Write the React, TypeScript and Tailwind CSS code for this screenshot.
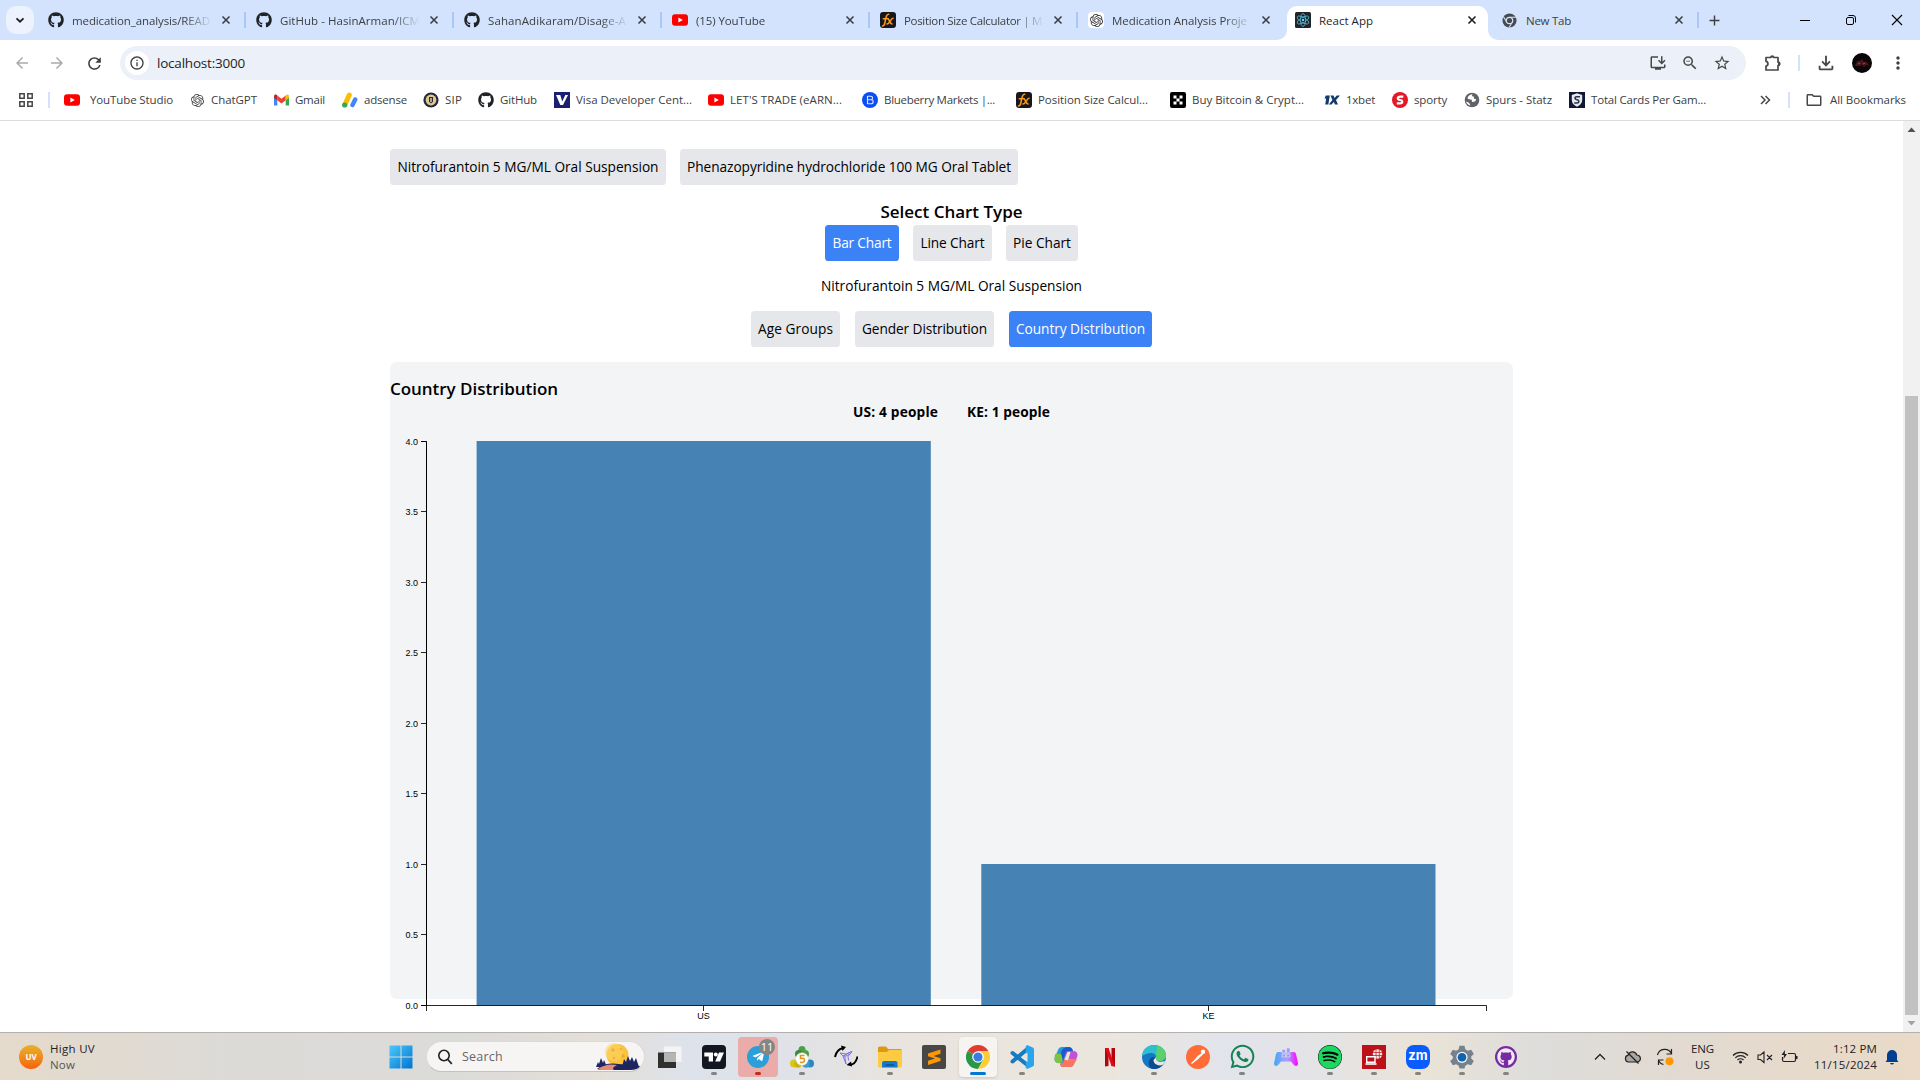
import React, { useLayoutEffect, useRef, useState } from 'react';
import { FaGithub, FaSpotify, FaWhatsapp, FaTelegramPlane } from 'react-icons/fa';
import {
  MdArrowBack, MdArrowForward, MdRefresh, MdInfoOutline, MdAdd, MdMoreVert,
  MdOutlineInstallDesktop, MdZoomOut, MdStarBorder, MdOutlineFileDownload, MdOutlineFolder,
} from 'react-icons/md';
import { SiOpenai } from 'react-icons/si';

/* Text whose tracking is adjusted so that it fills a known width. */
function Fit({ w, children, className = '' }: { w: number; children: string; className?: string }) {
  const ref = useRef<HTMLSpanElement>(null);
  const [spacing, setSpacing] = useState(0);
  useLayoutEffect(() => {
    const el = ref.current;
    if (!el) return;
    el.style.letterSpacing = '0px';
    const s = (w - el.getBoundingClientRect().width) / children.length;
    el.style.letterSpacing = `${s}px`;
    setSpacing(s);
  }, [w, children]);
  return (
    <span ref={ref} style={{ letterSpacing: spacing }} className={`inline-block w-max shrink-0 whitespace-pre ${className}`}>
      {children}
    </span>
  );
}

/* ---------- small brand icons (16px) ---------- */
const YouTube = () => (
  <svg width="16" height="16" viewBox="0 0 16 16"><rect y="2.2" width="16" height="11.6" rx="3" fill="#f00" /><path d="M6.4 5.4v5.2L10.8 8z" fill="#fff" /></svg>
);
const GitHub = () => <FaGithub size={16} color="#1f2328" />;
const OpenAI = () => <SiOpenai size={13} color="#444" />;
const OpenAITab = () => (
  <span className="flex size-4 items-center justify-center rounded-sm bg-white"><SiOpenai size={13} color="#333" /></span>
);
const Fx = () => (
  <svg width="16" height="16" viewBox="0 0 16 16">
    <rect width="16" height="16" rx="3" fill="#17181f" />
    <path d="M2.500 14c2 0 2.300-2 2.800-5.500C5.800 5 6.300 2.200 8.700 2.200M3.300 6.800h5M7.500 6.500c2 0 2.200 5.500 4.500 5.500M13 6.200c-2 0-3.500 5.800-6 5.800" stroke="#f79a1e" strokeWidth="1.600" fill="none" strokeLinecap="round" />
  </svg>
);
const ReactLogo = () => (
  <svg width="16" height="16" viewBox="0 0 16 16">
    <rect width="16" height="16" rx="1.500" fill="#20232a" />
    <g stroke="#53b9d1" fill="none" strokeWidth=".8">
      <ellipse cx="8" cy="8" rx="6.500" ry="2.600" transform="rotate(30 8 8)" />
      <ellipse cx="8" cy="8" rx="6.500" ry="2.600" transform="rotate(90 8 8)" />
      <ellipse cx="8" cy="8" rx="6.500" ry="2.600" transform="rotate(150 8 8)" />
    </g>
    <circle cx="8" cy="8" r="1.200" fill="#61dafb" />
  </svg>
);
const ChromeGrey = () => (
  <svg width="15" height="15" viewBox="0 0 16 16">
    <circle cx="8" cy="8" r="7.500" fill="#474b50" />
    <path d="M8 4.600h6.800M5 9.700 1.600 3.900M11 9.700 7.600 15.500" stroke="#d3e3fd" strokeWidth="1.100" />
    <circle cx="8" cy="8" r="3.400" fill="#474b50" stroke="#d3e3fd" strokeWidth="1.300" />
  </svg>
);
const Gmail = () => (
  <svg width="15" height="16" viewBox="0 0 15 16">
    <path d="M0 4.500V13.500h3.300V7z" fill="#4285f4" /><path d="M15 4.500V13.500h-3.300V7z" fill="#34a853" />
    <path d="M3.300 3.500v4.700l4.200 3.200 4.200-3.200V3.500L7.500 6.700z" fill="#ea4335" />
    <path d="M0 4.200C0 2.500 2 2 3.300 3.200v5L0 5.700z" fill="#c5221f" /><path d="M15 4.200c0-1.700-2-2.200-3.300-1v5L15 5.700z" fill="#fbbc04" />
  </svg>
);
const AdSense = () => (
  <svg width="16" height="16" viewBox="0 0 16 16">
    <path d="M3 12.500 7.300 3" stroke="#fbbc04" strokeWidth="5" strokeLinecap="round" />
    <path d="m10.500 13 2.700-5.500" stroke="#4285f4" strokeWidth="4.400" strokeLinecap="round" />
    <circle cx="2.700" cy="13" r="2.600" fill="#34a853" />
  </svg>
);
const Sip = () => (
  <svg width="16" height="16" viewBox="0 0 16 16">
    <circle cx="8" cy="8" r="7.600" fill="#26283f" /><circle cx="8" cy="8" r="5.400" fill="#dcc98b" />
    <path d="M6 5h4v4.500L8 11.500 6 9.500z" fill="#26283f" /><path d="M7.300 6h1.400v4H7.300z" fill="#e9dcae" />
  </svg>
);
const Visa = () => (
  <svg width="16" height="16" viewBox="0 0 16 16"><rect width="16" height="16" fill="#1a1f71" /><path d="M2 3h4.300l1.900 6.500L11.300 3H14L9 13H6.300z" fill="#fff" /></svg>
);
const Blueberry = () => (
  <svg width="16" height="16" viewBox="0 0 16 16">
    <circle cx="8" cy="8" r="8" fill="#0b4df5" />
    <path d="M5.500 4v8M5.500 4.300h3.300a1.700 1.700 0 0 1 0 3.500H5.500M5.500 7.800h3.700a2 2 0 0 1 0 4H5.500" stroke="#dfe8ff" strokeWidth="1.100" fill="none" />
  </svg>
);
const Okx = () => (
  <svg width="16" height="16" viewBox="0 0 16 16">
    <rect width="16" height="16" rx="2" fill="#000" />
    <path d="M3.500 3.500h3v3h-3zM9.500 3.500h3v3h-3zM6.500 6.500h3v3h-3zM3.500 9.500h3v3h-3zM9.500 9.500h3v3h-3z" fill="#fff" />
  </svg>
);
const OneX = () => (
  <svg width="16" height="16" viewBox="0 0 16 16"><path d="M1.800 3.500h4L4.300 12.500H1.200l1-6H.5zM6.500 3.500h3l1 2.500 2.300-2.500H16L12 8l2 4.500h-3L9.800 10l-2.300 2.500H4.800L8.400 8z" fill="#123a6d" /></svg>
);
const Sporty = () => (
  <svg width="16" height="16" viewBox="0 0 16 16">
    <circle cx="8" cy="8" r="8" fill="#e41827" /><path d="M11.300 4.600H8.500C5 4.600 5 7.800 8 8s3 3.400 0 3.400H4.800" stroke="#fff" strokeWidth="2.200" fill="none" />
  </svg>
);
const Globe = () => (
  <svg width="16" height="16" viewBox="0 0 16 16">
    <circle cx="8" cy="8" r="7.300" fill="#5f6368" />
    <path d="M8.500 2.200C4.500 2.500 3 5.500 4 7l3.700.8.300 2.200 3-.4 1.400-2.400-2.300-.5-.3-2.200-2-.2zM2 9.500l3 1.300 1.500 2.800C4 13 2.500 11.500 2 9.500z" fill="#fff" />
  </svg>
);
const Shield = () => (
  <svg width="16" height="16" viewBox="0 0 16 16">
    <rect width="16" height="16" fill="#101736" /><path d="M8 1.200 13.200 3v5c0 3.300-2.200 5.300-5.200 6.800C5 13.300 2.800 11.300 2.800 8V3z" fill="#e7e8ec" />
    <path d="M11 4.800H7.500c-2.300 0-1.800 2.700.5 3 2.600.3 2.300 3.200 0 3.200H5.200" stroke="#2b304a" strokeWidth="1.600" fill="none" />
  </svg>
);

const Close = ({ dark = false }: { dark?: boolean }) => (
  <svg width="16" height="16" viewBox="0 0 16 16" className="shrink-0"><path d="m4.500 4.500 7 7m0-7-7 7" stroke={dark ? '#1f1f1f' : '#3c4043'} strokeWidth="1.600" /></svg>
);

const tabs = [
  { icon: <GitHub />, title: 'medication_analysis/READ', w: 138 },
  { icon: <GitHub />, title: 'GitHub - HasinArman/ICM', w: 140 },
  { icon: <GitHub />, title: 'SahanAdikaram/Disage-A', w: 138 },
  { icon: <YouTube />, title: '(15) YouTube', w: 69 },
  { icon: <Fx />, title: 'Position Size Calculator | M', w: 138 },
  { icon: <OpenAITab />, title: 'Medication Analysis Proje', w: 135 },
];

function TabStrip() {
  return (
    <div className="flex h-10 bg-[#d3e3fd] text-[11.500px] text-[#3c4043]">
      <div className="ml-1.5 mt-1.5 flex size-7 shrink-0 items-center justify-center rounded-[10px] bg-[#ecf2fe]">
        <svg width="10" height="10" viewBox="0 0 10 10"><path d="m1.500 3.300 3.500 3.400 3.500-3.400" stroke="#1f1f1f" strokeWidth="1.800" fill="none" /></svg>
      </div>
      <div className="ml-3.5 flex h-10">
        {tabs.map((t, i) => (
          <div key={i} className="flex w-52 items-center">
            <span className="flex size-4 shrink-0 items-center justify-center">{t.icon}</span>
            <span className="ml-2 w-[140px] overflow-hidden pt-[2px] [mask-image:linear-gradient(to_right,black_112px,transparent_140px)]">
              <Fit w={t.w}>{t.title}</Fit>
            </span>
            <span className="ml-[6px] flex"><Close /></span>
            <span className={i < 5 ? 'ml-[10px] h-4 w-[2px] bg-[#a8c7fa]' : 'hidden'} />
          </div>
        ))}
      </div>
      <div className="relative -ml-[9px] mt-1.5 flex h-[34px] w-[201px] items-center rounded-t-[10px] bg-white pb-1.5 pl-2 text-[#1f1f1f]">
        <svg className="absolute -left-[10px] bottom-0" width="10" height="10"><path d="M10 0v10H0A10 10 0 0 0 10 0z" fill="#fff" /></svg>
        <svg className="absolute -right-[10px] bottom-0" width="10" height="10"><path d="M0 0v10h10A10 10 0 0 1 0 0z" fill="#fff" /></svg>
        <ReactLogo />
        <span className="ml-2 w-[145px] pt-[2px]"><Fit w={54}>React App</Fit></span>
        <Close dark />
      </div>
      <div className="ml-3.5 flex h-10 w-[198px] items-center">
        <ChromeGrey />
        <span className="ml-[9px] w-[145px] pt-[2px]"><Fit w={45}>New Tab</Fit></span>
        <Close />
        <span className="ml-[10px] h-4 w-[2px] bg-[#a8c7fa]" />
      </div>
      <div className="ml-[6px] flex h-10 items-center"><MdAdd size={17} color="#3c4043" /></div>
      <div className="ml-auto flex h-10 items-center gap-[30px] pr-[15px]">
        <svg width="16" height="16" viewBox="0 0 16 16"><path d="M3 8.500h10" stroke="#000" /></svg>
        <svg width="16" height="16" viewBox="0 0 16 16"><rect x="3.500" y="5.500" width="7" height="7" rx="1.500" stroke="#000" fill="none" /><path d="M5.500 3.500H10A2.500 2.500 0 0 1 12.500 6v4.500" stroke="#000" fill="none" /></svg>
        <svg width="16" height="16" viewBox="0 0 16 16"><path d="m3 3 10 10M13 3 3 13" stroke="#000" strokeWidth="1.100" /></svg>
      </div>
    </div>
  );
}

function Toolbar() {
  return (
    <div className="flex h-[46px] items-center bg-white text-[#474747]">
      <span className="ml-[13px] text-[#a8abb0]"><MdArrowBack size={18} /></span>
      <span className="ml-[17px] text-[#a8abb0]"><MdArrowForward size={18} /></span>
      <span className="ml-[19px]"><MdRefresh size={19} color="#3c4043" /></span>
      <div className="ml-[16px] flex h-[34px] w-[1626px] items-center rounded-full bg-[#ecf0f9] pl-[5px]">
        <span className="flex size-6 items-center justify-center rounded-full bg-white"><MdInfoOutline size={16} color="#3c4043" /></span>
        <span className="ml-2 text-[13.500px] text-[#1f1f1f]"><Fit w={88}>localhost:3000</Fit></span>
        <div className="ml-auto flex items-center gap-[14px] pr-[15px]">
          <MdOutlineInstallDesktop size={18} /><MdZoomOut size={18} /><MdStarBorder size={18} />
        </div>
      </div>
      <svg className="ml-[17px]" width="20" height="20" viewBox="0 0 20 20">
        <path d="M3 4.500h4.600a1.700 1.700 0 0 1 3.300 0H15v4.600a1.700 1.700 0 0 1 0 3.400v4.500H3v-4c2.600-.3 2.600-4.300 0-4.600z" stroke="#474747" strokeWidth="1.700" strokeLinejoin="round" fill="none" />
        <path d="M7.700 4.500a1.600 1.600 0 0 1 3.200 0zM15 9.200a1.600 1.600 0 0 1 0 3.200z" fill="#474747" />
      </svg>
      <span className="ml-[15px] h-4 w-[2px] bg-[#d3e3fd]" />
      <span className="ml-[15px]"><MdOutlineFileDownload size={22} /></span>
      <svg className="ml-[15px]" width="20" height="20" viewBox="0 0 20 20">
        <circle cx="10" cy="10" r="10" fill="#0a0507" /><path d="M3 13c1-5 3-6 5-5l2-2 2 3c3-1 4 1 5 4l-3-1-2 2-2-2-3 1z" fill="#48151b" /><path d="m6 11 2-1m3 1 2-1" stroke="#d23a3f" />
      </svg>
      <span className="ml-[16px]"><MdMoreVert size={20} color="#3c4043" /></span>
    </div>
  );
}

const bookmarks = [
  { icon: <YouTube />, t: 'YouTube Studio', w: 83, gap: 'gap-[10px]', box: 'w-[125px]' },
  { icon: <OpenAI />, t: 'ChatGPT', w: 46, gap: 'gap-[6px]', box: 'w-[84px]' },
  { icon: <Gmail />, t: 'Gmail', w: 30, gap: 'gap-[6px]', box: 'w-[69px]' },
  { icon: <AdSense />, t: 'adsense', w: 43, gap: 'gap-[6px]', box: 'w-[81px]' },
  { icon: <Sip />, t: 'SIP', w: 17, gap: 'gap-[6px]', box: 'w-[55px]' },
  { icon: <GitHub />, t: 'GitHub', w: 37, gap: 'gap-[6px]', box: 'w-[76px]' },
  { icon: <Visa />, t: 'Visa Developer Cent...', w: 116, gap: 'gap-[6px]', box: 'w-[154px]' },
  { icon: <YouTube />, t: "LET'S TRADE (eARN...", w: 112, gap: 'gap-[6px]', box: 'w-[154px]' },
  { icon: <Blueberry />, t: 'Blueberry Markets |...', w: 111, gap: 'gap-[6px]', box: 'w-[154px]' },
  { icon: <Fx />, t: 'Position Size Calcul...', w: 110, gap: 'gap-[6px]', box: 'w-[154px]' },
  { icon: <Okx />, t: 'Buy Bitcoin & Crypt...', w: 112, gap: 'gap-[6px]', box: 'w-[154px]' },
  { icon: <OneX />, t: '1xbet', w: 29, gap: 'gap-[6px]', box: 'w-[68px]' },
  { icon: <Sporty />, t: 'sporty', w: 33, gap: 'gap-[6px]', box: 'w-[72px]' },
  { icon: <Globe />, t: 'Spurs - Statz', w: 66, gap: 'gap-[6px]', box: 'w-[105px]' },
  { icon: <Shield />, t: 'Total Cards Per Gam...', w: 115, gap: 'gap-[6px]', box: 'w-[189px]' },
];

function BookmarksBar() {
  return (
    <div className="flex h-[35px] items-center border-b border-[#dadce0] bg-white pb-[6px] text-[11.500px] text-[#3c4043]">
      <svg className="ml-[18px]" width="16" height="16" viewBox="0 0 16 16"><path d="M1.800 1.800h4.400v4.400H1.800zM9.800 1.800h4.400v4.400H9.800zM1.800 9.800h4.400v4.400H1.800zM9.800 9.800h4.400v4.400H9.800z" stroke="#474747" strokeWidth="1.500" fill="none" /></svg>
      <span className="ml-[14px] mr-[14px] h-4 w-[2px] bg-[#d3e3fd]" />
      {bookmarks.map((b, i) => (
        <div key={i} className={`flex shrink-0 items-center ${b.gap} ${b.box}`}>
          <span className="flex size-4 shrink-0 items-center justify-center">{b.icon}</span>
          <Fit w={b.w}>{b.t}</Fit>
        </div>
      ))}
      <svg width="14" height="14" viewBox="0 0 14 14"><path d="m3 3 4 4-4 4M7.500 3l4 4-4 4" stroke="#474747" strokeWidth="1.500" fill="none" /></svg>
      <span className="ml-[16px] mr-[15px] h-4 w-[2px] bg-[#d3e3fd]" />
      <MdOutlineFolder size={18} color="#474747" />
      <span className="ml-[7px]"><Fit w={76}>All Bookmarks</Fit></span>
    </div>
  );
}

/* ---------- page ---------- */
function Btn({ w, box, children, active = false }: { w: number; box: string; children: string; active?: boolean }) {
  return (
    <button className={`flex h-9 items-center justify-center rounded-[3.600px] ${box} ${active ? 'bg-[#3b82f6] text-white' : 'bg-[#e5e7eb] text-black'}`}>
      <Fit w={w}>{children}</Fit>
    </button>
  );
}

const ticks = ['4.0', '3.5', '3.0', '2.5', '2.0', '1.5', '1.0', '0.5', '0.0'];

function Chart() {
  return (
    <svg width="1123" height="600" className="block shrink-0 overflow-visible">
      <rect x="86.600" y="18" width="454.200" height="564.500" fill="#4682b4" />
      <rect x="591.300" y="441" width="454.200" height="141.500" fill="#4682b4" />
      <path d="M31 18.500H36.500V582.500H31" stroke="#000" fill="none" />
      <path d="M36.500 588V582.500H1096.500V588M313.500 582.500v5.500M818.500 582.500v5.500" stroke="#000" fill="none" strokeOpacity=".85" />
      {ticks.map((t, i) => (
        <g key={t}>
          <path d={`M31 ${Math.floor(18 + i * 70.5) + 0.5}h5.500`} stroke="#000" strokeOpacity=".85" />
          <text x="28" y={21.5 + i * 70.5} fontSize="9" textAnchor="end" textLength="12.500" lengthAdjust="spacingAndGlyphs" fontFamily="Liberation Sans, sans-serif">{t}</text>
        </g>
      ))}
      <text x="313.500" y="595.800" fontSize="9" textAnchor="middle" fontFamily="Liberation Sans, sans-serif">US</text>
      <text x="818.500" y="595.800" fontSize="9" textAnchor="middle" fontFamily="Liberation Sans, sans-serif">KE</text>
    </svg>
  );
}

function Page() {
  return (
    <div className="flex h-[911px] bg-white">
      <main className="flex h-[911px] w-[1903px] flex-col overflow-hidden px-[390px] pt-7 text-[13.700px] text-black">
        <div className="flex gap-[14px]">
          <Btn w={261} box="w-[276px]">Nitrofurantoin 5 MG/ML Oral Suspension</Btn>
          <Btn w={324} box="w-[338px]">Phenazopyridine hydrochloride 100 MG Oral Tablet</Btn>
        </div>
        <h2 className="mt-3 flex h-7 items-center justify-center pt-[2px] text-[17px] font-semibold"><Fit w={142}>Select Chart Type</Fit></h2>
        <div className="flex justify-center gap-[14px]">
          <Btn w={59} box="w-[74px]" active>Bar Chart</Btn>
          <Btn w={64} box="w-[79px]">Line Chart</Btn>
          <Btn w={58} box="w-[72px]">Pie Chart</Btn>
        </div>
        <p className="mt-[13px] flex h-6 items-center justify-center"><Fit w={261}>Nitrofurantoin 5 MG/ML Oral Suspension</Fit></p>
        <div className="mt-[13px] flex justify-center gap-[15px]">
          <Btn w={75} box="w-[89px]">Age Groups</Btn>
          <Btn w={125} box="w-[139px]">Gender Distribution</Btn>
          <Btn w={129} box="w-[143px]" active>Country Distribution</Btn>
        </div>
        <section className="mt-[15px] flex h-[637px] shrink-0 flex-col rounded-[7px] bg-[#f3f4f6] pt-[14px]">
          <h3 className="flex h-[25px] items-center text-[17px] font-semibold"><Fit w={168}>Country Distribution</Fit></h3>
          <div className="flex h-[23px] items-center justify-center gap-[29px] pt-px font-bold">
            <Fit w={85}>US: 4 people</Fit>
            <Fit w={83}>KE: 1 people</Fit>
          </div>
          <Chart />
        </section>
      </main>
      <div className="flex w-[17px] flex-col items-center bg-[#f1f1f1]">
        <svg width="17" height="17"><path d="M4.500 11h8l-4-4.500z" fill="#505050" /></svg>
        <div className="mt-[258px] h-[619px] w-[13px] bg-[#c1c1c1]" />
        <svg width="17" height="17"><path d="M4.500 6h8l-4 4.500z" fill="#a3a3a3" /></svg>
      </div>
    </div>
  );
}

/* ---------- taskbar ---------- */
const I = ({ children }: { children: React.ReactNode }) => <svg width="24" height="24" viewBox="0 0 24 24">{children}</svg>;

const apps: { icon: React.ReactNode; dot?: boolean; kind?: 'alert' | 'active' }[] = [
  { icon: <I><path d="M6 1.500h17.500v15.500H6z" fill="#f4f4f4" /><path d="M0 7.500h18V23H0z" fill="#30302f" /><path d="M6 7.500h12V17H6z" fill="#b5b5b5" /></I> },
  { dot: true, icon: <I><rect width="24" height="24" rx="4" fill="#131722" /><path d="M2.300 7.500h8.700v9H6.700v-5H2.300z" fill="#fff" /><circle cx="13.800" cy="9.500" r="2" fill="#fff" /><path d="M17 7.500h5l-4 9h-4.800z" fill="#fff" /></I> },
  { dot: true, kind: 'alert', icon: <span className="flex size-[22px] items-center justify-center rounded-full bg-[#2a9fda]"><FaTelegramPlane size={13} color="#fff" /></span> },
  { dot: true, icon: <I><path d="M12 4 20 19H4z" fill="#7b8f4b" /><circle cx="12" cy="4.500" r="3.500" fill="#4ca04a" /><circle cx="9" cy="9" r="4" fill="#358b3f" /><circle cx="15" cy="9" r="4" fill="#4ca04a" /><circle cx="4" cy="18.500" r="4" fill="#d8c61c" /><circle cx="8" cy="19" r="3.700" fill="#c8b311" /><circle cx="20" cy="18.500" r="4" fill="#2d86bd" /><circle cx="16" cy="19" r="3.700" fill="#3d9bcd" /><circle cx="12" cy="14" r="6.300" fill="#fff" stroke="#d9cda8" strokeWidth=".5" /><path d="M14.500 10.500h-4v3c3-.8 4 .4 4 1.700 0 2-2.500 2.800-4.500 1.800" stroke="#e0981c" strokeWidth="1.600" fill="none" /></I> },
  { icon: <I><path d="M1 12c1-5 4-8 8-9" stroke="#000" strokeWidth="2" fill="none" /><path d="m7 .5 5 1.500-3.500 4z" /><path d="M23.500 11.500c-1 5-4 8-7.500 8.500" stroke="#000" strokeWidth="1.800" fill="none" /><path d="m17 16.500-4.500 3.500 5.500 1.500z" /><path d="m18 6.500-6 2.500-6-1 3 3 3 8-1.500-9 7.500-3.500-4 5 .5 4M8 10.500l4 .5 4-2" stroke="#7b73ec" strokeWidth="1" fill="none" /></I> },
  { dot: true, icon: <I><path d="M0 3q0-1.500 1.500-1.500H8l2 2.500h12.500Q24 4 24 5.500V10H0z" fill="#dc9a11" /><path d="M0 7h9l2-2h13v16q0 1.500-1.500 1.500h-21Q0 22.500 0 21z" fill="#fdcb42" /><path d="M4 22.500V18q0-2 2-2h11.500q2 0 2 2v4.500z" fill="#1579c5" /><path d="M7.500 20h8.500" stroke="#0a548f" strokeWidth="1.500" /></I> },
  { icon: <I><rect width="24" height="24" rx="2" fill="#474747" /><path d="M18.500 4.500v4.300l-7 2.200 7 2.200V16L6 20v-4.300l7-2.200L6 11.300V8.500z" fill="#ff9800" /></I> },
  { dot: true, kind: 'active', icon: <I><circle cx="12" cy="12" r="12" fill="#fff" /><path d="M12 12 1.600 6A12 12 0 0 1 22.400 6H12z" fill="#e03c31" /><path d="M12 12 1.600 6a12 12 0 0 0 10.400 18l5.200-9z" fill="#27984a" /><path d="M12 6h10.400A12 12 0 0 1 12 24l5.200-9z" fill="#fdcc36" /><circle cx="12" cy="12" r="5.800" fill="#fff" /><circle cx="12" cy="12" r="4.600" fill="#3a7be8" /></I> },
  { dot: true, icon: <I><path d="M2.500 8 18 20.500M2.500 16.500 18 3.500" stroke="#147bc3" strokeWidth="4" strokeLinecap="round" /><path d="m17 0 5.800 2.500q1.200.7 1.200 2v15q0 1.300-1.200 2L17 24l-1.300-1.500V1.500z" fill="#29a5ed" /><path d="M17.500 7.500v9.500L11.200 12.200z" fill="#eae5dc" /></I> },
  { icon: <I><path d="M8 2h7q3 0 4 4l-5.500 1L10 18H5q-5 0-4.500-5L4 5q1-3 4-3z" fill="#219be0" /><path d="M1 9q4-1 9 1l-1.500 6q-1 2.500-3.500 2.300Q0 18 .5 13z" fill="#7cc342" /><path d="M14 2q4 0 5 4h-4q-3 0-4 4L9 16 7 8q1-6 7-6z" fill="#1e59cc" /><path d="M16 22H9q-2.500 0-3-3.500 3 .5 4-3L12.500 7q1-1 2.500-1h4q5 0 4.500 5L20 19q-1 3-4 3z" fill="#c152d2" /><path d="m23 14-3 5q-1 3-4 3H9q-2.500 0-3-3.500 3 .5 4-3l.6-2z" fill="#f77561" /><path d="m10.500 14.500 3-7.500h3l-2.500 8.500z" fill="#ede5df" /></I> },
  { icon: <I><path d="M7 3h3.500v18l-3.500.5zM13.500 3H17v18.500l-3.500-.5z" fill="#b1060f" /><path d="M7 3h3.500L17 21.500l-3.500-.5z" fill="#e50914" /></I> },
  { dot: true, icon: <I><circle cx="12" cy="12" r="12" fill="#1479c4" /><path d="M0 11C1 4 6 0 12 0c7 0 12 5 12 10 0 4-3 6-6 6-3 0-5-1-4-3 1-3-2-5-5-5-4 0-7 2-9 3z" fill="#2dbfd0" /><path d="M15 .5C21 2 24 6 24 10.500c0 3.500-3 5.500-6 5.500-3 0-5-1-4-3z" fill="#5bd06b" /><path d="M13.500 14c1 4 6 5.500 9 3-2 4.500-6 7-10.500 7-6 0-7-8-2.500-11.500 1-.8 3.500-1 4 1.500z" fill="#0c4a93" /><path d="M14 12c-1 4 3 6 9.500 4-1 2-2 3.300-3 4-4 1.500-9-1-9-5z" fill="#e9e7e1" /></I> },
  { icon: <I><circle cx="12" cy="12" r="12" fill="#ff6c37" /><path d="m5.500 18.500 6-7.500 4.500-3 1 1.500-4.500 4z" fill="#fff" /><circle cx="17" cy="6.800" r="2.200" fill="#fff" /><path d="m5.500 18.500 7-5.500" stroke="#fff" strokeWidth="1.200" /></I> },
  { dot: true, icon: <FaWhatsapp size={27} color="#15834f" /> },
  { icon: <I><defs><linearGradient id="pad"><stop stopColor="#45a8f5" /><stop offset=".55" stopColor="#a8a0ff" /><stop offset="1" stopColor="#f0f" /></linearGradient></defs><path d="M4 7h16q1.500 0 2 2l2 9.500q0 2.500-2 2.500-1.500 0-3-2l-2-2.500H7L5 19q-1.500 2-3 2-2 0-2-2.500L2 9q.5-2 2-2z" fill="url(#pad)" /><path d="M8 4.500h3.500v3.500H8zM12.500 3H16v5h-3.500zM8 9h3.500v3H8zM12.500 9H16v3h-3.500z" fill="#9a9cf8" stroke="#e5e5f0" strokeWidth=".6" /></I> },
  { dot: true, icon: <span className="rounded-full bg-black"><FaSpotify size={24} color="#1ed760" /></span> },
  { dot: true, icon: <I><path d="M0 0h24v24H0z" fill="#bd1119" /><circle cx="15.500" cy="9" r="4.800" fill="#f8e8e8" /><path d="M10.500 7.500h10M10.500 10.500h10M14 4v10M17.300 4v10" stroke="#bd1119" strokeWidth=".7" /><path d="M4.700 11.700h8.300v5.500H4.700z" fill="#bd1119" stroke="#fff" strokeWidth="1.400" /><path d="M3.500 19h11" stroke="#fff" strokeWidth="1.600" /></I> },
  { dot: true, icon: <span className="flex size-6 items-center justify-center rounded-[8px] bg-[#0b5cff] pb-[3px] font-['Inter',sans-serif] text-[13px] font-bold leading-none text-white">zm</span> },
  { dot: true, icon: <I><path d="M9.500.8h5l.8 3.500 2.500 1.400 3.400-1 2.600 4.400L21.200 11.500v2l2.600 2.400-2.600 4.300-3.400-1-2.500 1.500-.8 2.800h-5l-.8-2.800-2.500-1.500-3.400 1L.2 15.900l2.600-2.400v-2L.2 9.100l2.600-4.400 3.400 1 2.500-1.400z" fill="#75818d" /><circle cx="12" cy="12.300" r="5.600" fill="#f1f1f1" /><circle cx="12" cy="12.300" r="4.300" fill="#0e62af" /></I> },
  { dot: true, icon: <span className="flex size-[22px] items-center justify-center rounded-full bg-[#762ba0]"><FaGithub size={18} color="#f2e9f7" /></span> },
];

function Taskbar() {
  return (
    <footer className="flex h-12 items-center border-t border-[#b3b0ad] bg-[linear-gradient(90deg,#e5dacb_0%,#dcdad7_12%,#dbdbda_24%,#e4dfd7_31%,#dde2eb_36%,#e0e2e8_41%,#e9e4dd_47%,#ebe6dd_58%,#e2e4ec_64%,#e4e3e5_69%,#ebe3d7_74%,#dddddb_80%,#e2dad1_87%,#eadac7_100%)] text-[11.500px] text-[#222]">
      <span className="ml-[19px] flex size-6 shrink-0 items-center justify-center rounded-full bg-linear-to-b from-[#e7b02a] to-[#f4620c] text-[8px] font-bold text-white">UV</span>
      <div className="ml-[7px] flex w-[339px] shrink-0 flex-col leading-4">
        <Fit w={45}>High UV</Fit>
        <Fit w={25} className="text-[#555]">Now</Fit>
      </div>
      <svg className="shrink-0" width="24" height="24" viewBox="0 0 24 24">
        <defs><linearGradient id="win" x2="1" y2="1"><stop stopColor="#4cc8fa" /><stop offset="1" stopColor="#0074d0" /></linearGradient></defs>
        <path d="M.500.500h11v11H.500zM12.500.500h11v11h-11zM.500 12.500h11v11H.500zM12.500 12.500h11v11h-11z" fill="url(#win)" />
      </svg>
      <div className="ml-[13px] flex h-[31px] w-[219px] shrink-0 items-center rounded-full border border-[#dcdad8] border-b-[#c4c2c0] bg-[#f6f5f4] pl-[10px] text-[12.500px] text-[#666]">
        <svg width="16" height="16" viewBox="0 0 16 16"><circle cx="7" cy="6.500" r="5.200" stroke="#222" strokeWidth="1.600" fill="none" /><path d="m10.800 10.500 4 4.300" stroke="#222" strokeWidth="1.800" /></svg>
        <span className="ml-[9px] pt-px"><Fit w={41}>Search</Fit></span>
        <svg className="ml-auto mr-[4px]" width="44" height="28" viewBox="0 0 44 28">
          <circle cx="21.500" cy="12" r="11" fill="#fbc23c" /><circle cx="18" cy="9" r="9" fill="#fdd365" opacity=".6" />
          <circle cx="17" cy="7" r="1.700" fill="#f0b13a" /><circle cx="25" cy="6" r="1.300" fill="#f0b13a" /><circle cx="27" cy="13" r="1.700" fill="#f0a832" /><circle cx="18" cy="15" r="1.300" fill="#f0b13a" />
          <path d="M0 24l2-5 1 2 2-6 2 5 1-3 3 7zM26 24l2-8 2 3 2-6 2 5 2-4 2 5 2-4 3 9z" fill="#1c2762" />
          <path d="M1 26q8-7 22-5 12 1 21 2-2 4-10 4H5z" fill="#20245c" /><path d="M2 26q8-6 19-4-6 3-3 5H5z" fill="#e48b78" />
        </svg>
      </div>
      <div className="ml-[3px] flex h-[47px] shrink-0">
        {apps.map((a, i) => (
          <div key={i} className="relative flex w-11 items-center justify-center">
            <div className={`flex h-10 items-center justify-center ${a.kind === 'alert' ? 'w-10 rounded-[4px] bg-[#e9aca8]' : a.kind === 'active' ? 'w-[38px] rounded-[4px] bg-[#f6f4f0] shadow-sm' : 'w-10'}`}>{a.icon}</div>
            {a.kind === 'alert' && <span className="absolute right-[5px] top-[6px] flex size-4 items-center justify-center rounded-full bg-[#858585] text-[11px] text-white">11</span>}
            {a.dot && <span className={`absolute bottom-[5px] h-[3px] rounded-full ${a.kind === 'active' ? 'w-4 bg-[#0078d4]' : a.kind === 'alert' ? 'w-1.5 bg-[#c42b1c]' : 'w-1.5 bg-[#858481]'}`} />}
          </div>
        ))}
      </div>
      <svg className="ml-auto shrink-0" width="12" height="12" viewBox="0 0 12 12"><path d="m1 8.500 5-5 5 5" stroke="#222" strokeWidth="1.300" fill="none" /></svg>
      <svg className="ml-[18px] shrink-0" width="17" height="16" viewBox="0 0 17 16"><path d="M4.500 13a3.500 3.500 0 0 1-.3-6.900A4.500 4.500 0 0 1 12.800 6a3.500 3.500 0 0 1 .2 7z" fill="#a9a7a4" stroke="#222" strokeWidth="1.200" /><path d="m2.500 2.500 12 12" stroke="#222" strokeWidth="1.300" /></svg>
      <svg className="ml-[15px] shrink-0" width="18" height="18" viewBox="0 0 18 18"><path d="M1.500 7A7.500 7.500 0 0 1 15.500 5.500M15.500 1v5h-5M7.500 16.500A7.500 7.500 0 0 1 2.500 12.500M2.500 17v-5h5" stroke="#222" strokeWidth="1.200" fill="none" /><circle cx="13.500" cy="13.200" r="4" fill="#ff9800" /></svg>
      <div className="ml-[17px] flex flex-col items-center leading-4"><Fit w={23}>ENG</Fit><Fit w={15}>US</Fit></div>
      <svg className="ml-[18px] shrink-0" width="17" height="16" viewBox="0 0 17 16"><path d="M1 6.500a10.500 10.500 0 0 1 15 0M3.300 8.800a7.300 7.300 0 0 1 10.400 0M5.500 11a4.200 4.200 0 0 1 6 0" stroke="#222" strokeWidth="1.200" fill="none" /><circle cx="8.500" cy="13" r="1.500" fill="#222" /></svg>
      <svg className="ml-[8px] shrink-0" width="16" height="16" viewBox="0 0 16 16"><path d="M1 6h2.500L7 3v10.500L3.500 10.500H1zM10 6l5 5m0-5-5 5" stroke="#222" strokeWidth="1.100" fill="none" /></svg>
      <svg className="ml-[8px] shrink-0" width="17" height="16" viewBox="0 0 17 16"><path d="M7 4.500h6q1.500 0 1.500 1.500v5q0 1.500-1.500 1.500H3q-1.500 0-1.500-1.500V8" stroke="#222" strokeWidth="1.200" fill="none" /><path d="M15 7h1.500v3H15zM4 1 .5 6H3l-.5 4L6 5H3.800z" fill="#222" /></svg>
      <div className="ml-[16px] flex flex-col items-end leading-4"><Fit w={44}>1:12 PM</Fit><Fit w={63}>11/15/2024</Fit></div>
      <svg className="ml-[8px] mr-[21px] shrink-0" width="14" height="16" viewBox="0 0 14 16"><path d="M2 11V6a5 5 0 0 1 10 0v5l1.500 2H.500zM5 14h4q-.5 1.500-2 1.500T5 14z" fill="#003e92" /></svg>
    </footer>
  );
}

export default function App() {
  return (
    <div className="flex h-[1080px] w-[1920px] flex-col overflow-hidden bg-white font-['Open_Sans','Noto_Sans',sans-serif]">
      <TabStrip />
      <Toolbar />
      <BookmarksBar />
      <Page />
      <Taskbar />
    </div>
  );
}
